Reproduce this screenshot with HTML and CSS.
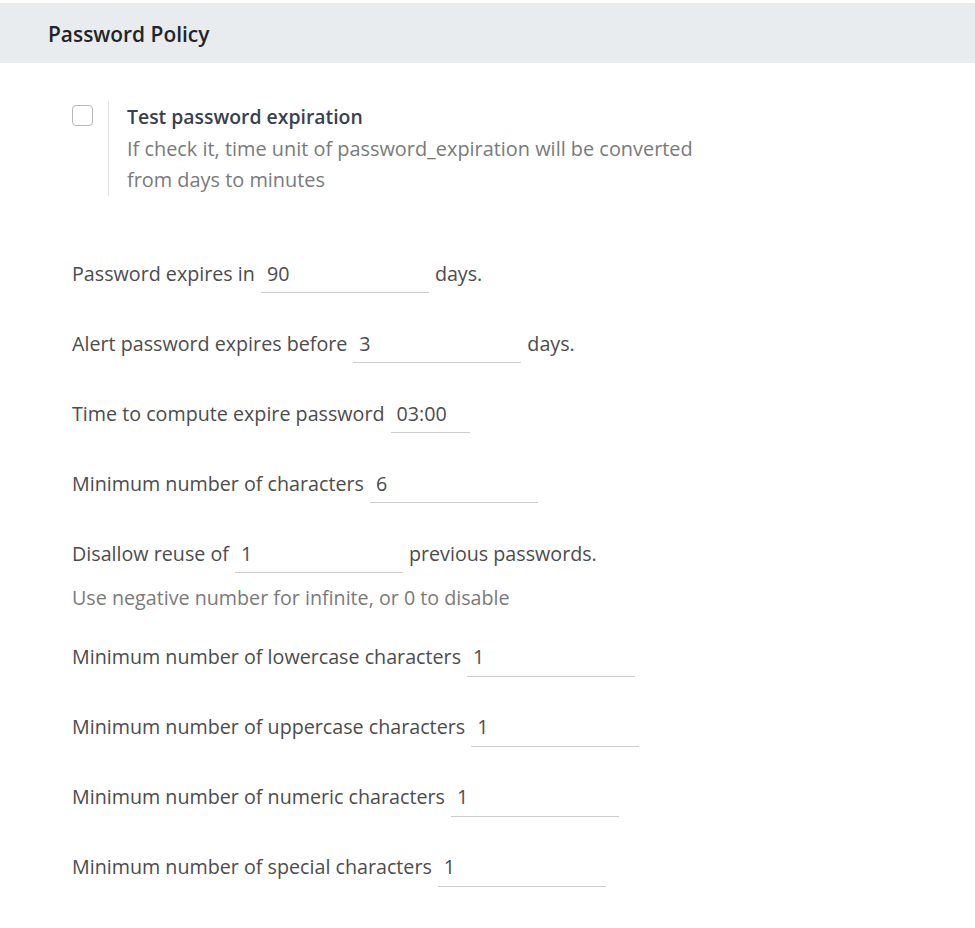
FILE: index.html
```html
<!DOCTYPE html>
<html lang="en">
<head>
<meta charset="utf-8">
<title>Password Policy</title>
<link rel="stylesheet" href="styles.css">
</head>
<body>
<div class="section-header">Password Policy</div>
<div class="content">
  <div class="setting">
    <div class="setting-left"><span class="checkbox"></span></div>
    <div class="setting-right">
      <div class="setting-title">Test password expiration</div>
      <div class="setting-desc">If check it, time unit of password_expiration will be converted from days to minutes</div>
    </div>
  </div>
  <div class="fields">
    <div class="row"><span class="label">Password expires in</span><span class="input">90</span><span class="suffix">days.</span></div>
    <div class="row"><span class="label">Alert password expires before</span><span class="input">3</span><span class="suffix">days.</span></div>
    <div class="row"><span class="label">Time to compute expire password</span><span class="input input-short">03:00</span></div>
    <div class="row"><span class="label">Minimum number of characters</span><span class="input">6</span></div>
    <div class="row row-with-help"><span class="label">Disallow reuse of</span><span class="input">1</span><span class="suffix">previous passwords.</span></div>
    <div class="help">Use negative number for infinite, or 0 to disable</div>
    <div class="row"><span class="label">Minimum number of lowercase characters</span><span class="input">1</span></div>
    <div class="row"><span class="label">Minimum number of uppercase characters</span><span class="input">1</span></div>
    <div class="row"><span class="label">Minimum number of numeric characters</span><span class="input">1</span></div>
    <div class="row"><span class="label">Minimum number of special characters</span><span class="input">1</span></div>
  </div>
</div>
</body>
</html>
```
FILE: styles.css
```css
html, body {
  margin: 0;
  padding: 0;
  background: #ffffff;
}
body {
  font-family: "Open Sans", "Noto Sans", sans-serif;
  font-size: 19.7px;
  line-height: 31.5px;
  color: #4c4c4c;
}
.section-header {
  margin-top: 3px;
  height: 60px;
  line-height: 62px;
  padding-left: 48px;
  background: #e9ecef;
  color: #212529;
  font-weight: 600;
  font-size: 20.9px;
}
.content {
  padding-left: 72px;
}
.setting {
  display: flex;
  margin-top: 38px;
}
.setting-left {
  width: 36px;
  padding-top: 4px;
}
.checkbox {
  display: block;
  width: 19px;
  height: 19px;
  border: 1px solid #b8b8b8;
  border-radius: 4px;
}
.setting-right {
  border-left: 1px solid #dee2e6;
  padding-left: 18px;
  max-width: 580px;
}
.setting-title {
  font-weight: 600;
  font-size: 19.4px;
  color: #374151;
}
.setting-desc {
  color: #7a7a7a;
  font-size: 19.9px;
}
.fields {
  margin-top: 59px;
  display: flex;
  flex-direction: column;
}
.row {
  display: flex;
  align-items: baseline;
  height: 39px;
  margin-bottom: 31px;
}
.row-with-help {
  margin-bottom: 8px;
}
.help {
  color: #7a7a7a;
  margin-bottom: 25px;
}
.label {
  margin-right: 6px;
}
.label-first {
  letter-spacing: 0;
}
.input {
  display: inline-block;
  box-sizing: border-box;
  width: 168px;
  padding: 3px 6px 3px;
  border-bottom: 1px solid #cccccc;
  color: #4c4c4c;
}
.input-short {
  width: 79px;
}
.suffix {
  margin-left: 6px;
}
```
